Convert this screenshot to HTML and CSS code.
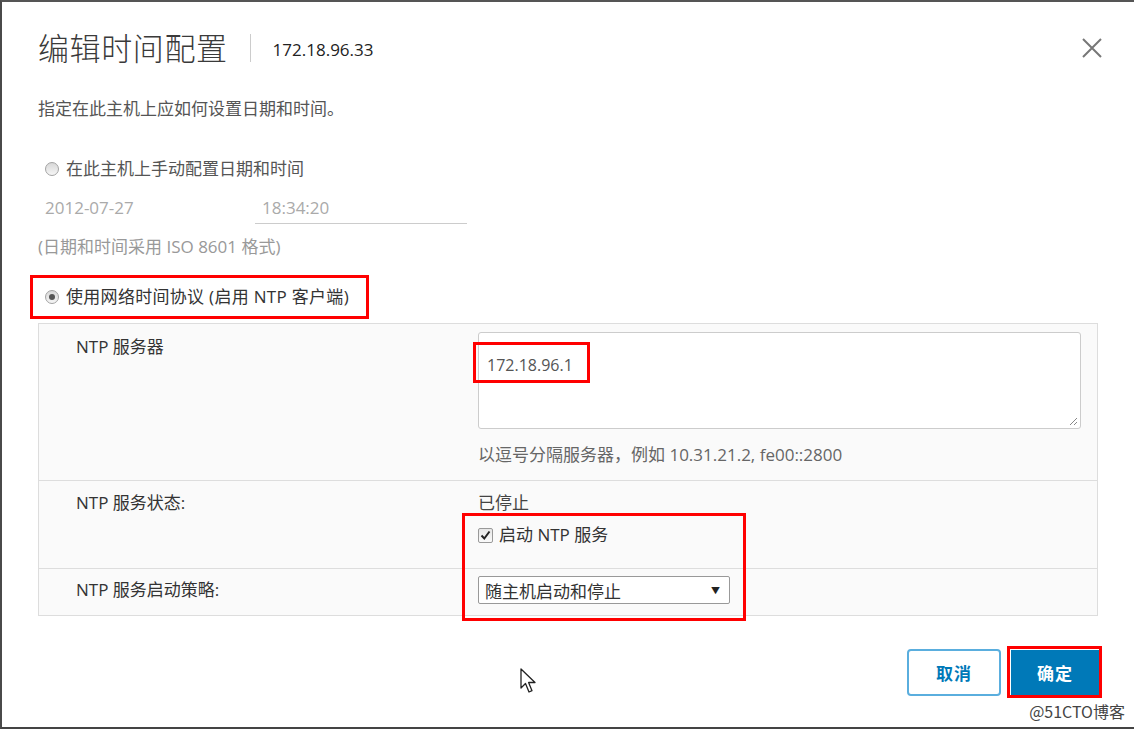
FILE: index.html
```html
<!DOCTYPE html>
<html>
<head lang="zh-CN">
    <meta charset="UTF-8">
    <title>编辑时间配置</title>
    <link rel="stylesheet" href="styles.css">
</head>
<body>
    <div id="dialog">
        <div class="head">
            <h1 class="title">编辑时间配置</h1>
            <span class="sep"></span>
            <span class="host">172.18.96.33</span>
            <svg class="close" width="20" height="20" viewBox="0 0 20 20"><path d="M1 1L19 19M19 1L1 19" stroke="#777" stroke-width="2" fill="none"/></svg>
        </div>
        <p class="desc">指定在此主机上应如何设置日期和时间。</p>

        <label class="opt opt-off"><span class="radio"></span>在此主机上手动配置日期和时间</label>
        <div class="dt">
            <span class="date">2012-07-27</span>
            <span class="time">18:34:20</span>
        </div>
        <p class="note">(日期和时间采用 ISO 8601 格式)</p>

        <div class="mark mark-ntp">
            <label class="opt"><span class="radio on"></span>使用网络时间协议 (启用 NTP 客户端)</label>
        </div>

        <div id="panel">
            <div class="row row1">
                <div class="lbl">NTP 服务器</div>
                <div class="val">
                    <div class="area">
                        <span class="area-txt">172.18.96.1</span>
                        <span class="mark mark-ip"></span>
                        <svg class="grip" width="10" height="10" viewBox="0 0 10 10"><path d="M9 2L2 9M9 6L6 9" stroke="#888" stroke-width="1" fill="none"/></svg>
                    </div>
                    <p class="hint">以逗号分隔服务器，例如 10.31.21.2, fe00::2800</p>
                </div>
            </div>
            <div class="row row2">
                <div class="lbl">NTP 服务状态:</div>
                <div class="val">
                    <p class="state">已停止</p>
                    <label class="chk"><span class="box"><svg width="11" height="11" viewBox="0 0 11 11"><path d="M1.5 5.5L4.3 8.5L9.5 1.5" stroke="#222" stroke-width="2" fill="none"/></svg></span>启动 NTP 服务</label>
                </div>
            </div>
            <div class="row row3">
                <div class="lbl">NTP 服务启动策略:</div>
                <div class="val">
                    <div class="sel"><span>随主机启动和停止</span><i>▼</i></div>
                </div>
            </div>
            <span class="mark mark-svc"></span>
        </div>

        <div class="foot">
            <button class="btn btn-cancel">取消</button>
            <div class="mark mark-ok"><button class="btn btn-ok">确定</button></div>
        </div>

        <svg class="cursor" width="18" height="26" viewBox="0 0 18 26"><path d="M1 1L1 20L5.5 15.5L9 24L12 22.7L8.6 14.5L15 14.5Z" fill="#fff" stroke="#222" stroke-width="1.3" stroke-linejoin="round"/></svg>
        <span class="wm">@51CTO博客</span>
    </div>
</body>
</html>
```
FILE: styles.css
```css
*{
    margin: 0;
    padding: 0;
    box-sizing: border-box;
}
body{
    font-family: "Open Sans", "Noto Sans CJK SC", sans-serif;
    font-size: 17px;
    color: #333;
    background: #fff;
}
#dialog{
    position: relative;
    width: 1134px;
    height: 729px;
    padding: 0 36px 0 36px;
    border-left: 2px solid #4a4a4a;
    border-top: 2px solid #555;
    border-bottom: 2px solid #444;
    overflow: hidden;
}
.head{
    display: flex;
    align-items: center;
    margin-top: 28px;
    height: 36px;
}
.title{
    font-size: 31px;
    font-weight: 300;
    color: #3a3a3a;
    line-height: 36px;
    letter-spacing: 0.6px;
}
.sep{
    width: 1px;
    height: 28px;
    background: #ccc;
    margin: 0 22px 0 22px;
}
.host{
    font-size: 17px;
    color: #222;
    padding-top: 2px;
}
.close{
    margin-left: auto;
    margin-right: -4px;
}
.desc{
    margin-top: 32px;
    line-height: 22px;
    font-size: 17px;
    color: #555;
}
.opt{
    display: flex;
    align-items: center;
    line-height: 22px;
    font-size: 17px;
    color: #333;
}
.opt-off{
    margin-top: 38px;
    padding-left: 7px;
    color: #555;
}
.radio{
    width: 14px;
    height: 14px;
    border-radius: 50%;
    border: 1px solid #a3a3a3;
    background: linear-gradient(#d8d8d8, #f6f6f6);
    margin-right: 7px;
    position: relative;
}
.radio.on::after{
    content: "";
    position: absolute;
    left: 3px;
    top: 3px;
    width: 6px;
    height: 6px;
    border-radius: 50%;
    background: #555;
}
.dt{
    display: flex;
    margin-top: 17px;
    color: #aaa;
    font-size: 17px;
}
.date{
    width: 217px;
    padding-left: 7px;
    line-height: 22px;
}
.time{
    width: 212px;
    line-height: 22px;
    padding: 0 0 4px 7px;
    border-bottom: 1px solid #ccc;
}
.note{
    margin-top: 12px;
    line-height: 22px;
    color: #999;
    font-size: 17px;
}
.mark{
    border: 3px solid #f00;
}
.mark-ntp{
    display: inline-flex;
    align-items: center;
    height: 44px;
    margin: 17px 0 0 -8px;
    padding: 0 17px 0 12px;
}
.mark-ntp .opt{
    letter-spacing: 0.3px;
}
#panel{
    position: relative;
    margin-top: 4px;
    border: 1px solid #ddd;
    background: #fafafa;
}
.row{
    display: grid;
    grid-template-columns: 402px 1fr;
    padding: 0 16px 0 37px;
    border-top: 1px solid #ddd;
}
.row1{
    border-top: none;
    padding-top: 8px;
    padding-bottom: 15px;
}
.lbl{
    font-size: 17px;
    line-height: 20px;
    color: #333;
}
.row1 .lbl{
    margin-top: 5px;
}
.area{
    position: relative;
    height: 97px;
    background: #fff;
    border: 1px solid #ccc;
    border-radius: 3px;
    padding: 20px 0 0 8px;
}
.area-txt{
    font-size: 16px;
    line-height: 20px;
    color: #555;
}
.mark-ip{
    position: absolute;
    left: -6px;
    top: 9px;
    width: 117px;
    height: 41px;
}
.grip{
    position: absolute;
    right: 2px;
    bottom: 2px;
}
.hint{
    margin-top: 16px;
    font-size: 17px;
    line-height: 20px;
    color: #666;
}
.row2{
    padding-top: 12px;
    padding-bottom: 23px;
}
.state{
    font-size: 17px;
    line-height: 20px;
    color: #444;
}
.chk{
    display: flex;
    align-items: center;
    margin-top: 12px;
    font-size: 17px;
    line-height: 20px;
    color: #333;
}
.box{
    display: flex;
    align-items: center;
    justify-content: center;
    width: 15px;
    height: 15px;
    border: 1px solid #999;
    border-radius: 2px;
    background: linear-gradient(#e6e6e6, #fafafa);
    margin-right: 6px;
}
.row3{
    align-items: center;
    padding-top: 7px;
    padding-bottom: 11px;
}
.sel{
    display: flex;
    align-items: center;
    justify-content: space-between;
    width: 252px;
    height: 28px;
    background: #fff;
    border: 1px solid #999;
    border-radius: 2px;
    padding: 0 9px 0 6px;
    font-size: 17px;
    color: #333;
}
.sel i{
    font-style: normal;
    font-size: 9px;
    color: #222;
}
.mark-svc{
    position: absolute;
    left: 423px;
    top: 189px;
    width: 284px;
    height: 108px;
}
.foot{
    display: flex;
    justify-content: flex-end;
    align-items: center;
    margin-top: 30px;
    margin-right: -4px;
}
.btn{
    font-family: "Open Sans", "Noto Sans CJK SC", sans-serif;
    font-size: 17px;
    font-weight: bold;
    letter-spacing: 1px;
    cursor: pointer;
}
.btn-cancel{
    width: 94px;
    height: 47px;
    background: #fff;
    color: #0079b8;
    border: 2px solid #5aaede;
    border-radius: 4px;
    margin-right: 6px;
}
.mark-ok{
    padding: 1px 0 0 1px;
}
.btn-ok{
    display: block;
    width: 88px;
    height: 45px;
    background: #0079b8;
    color: #fff;
    border: none;
}
.cursor{
    position: absolute;
    left: 518px;
    top: 666px;
}
.wm{
    position: absolute;
    right: 9px;
    bottom: 4px;
    font-family: "Noto Sans CJK SC", sans-serif;
    font-size: 16px;
    color: #444;
}
```
